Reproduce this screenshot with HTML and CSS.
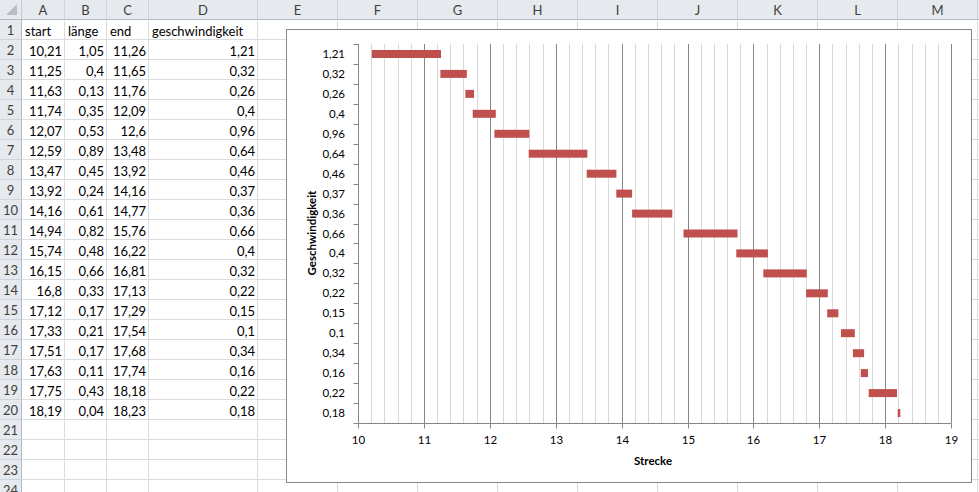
FILE: index.html
```html
<!DOCTYPE html>
<html lang="de">
<head>
  <meta charset="UTF-8" />
  <title>Mappe1 - Microsoft Excel</title>
  <link rel="stylesheet" href="styles.css">
</head>
<body>

  <div class="sheet" id="sheet"></div>

  <div class="chart">
    <svg id="chart" width="684" height="452" xmlns="http://www.w3.org/2000/svg"></svg>
  </div>

<script>
  // start, länge, end, geschwindigkeit
  const data = [
    [10.21, 1.05, 11.26, 1.21],
    [11.25, 0.4, 11.65, 0.32],
    [11.63, 0.13, 11.76, 0.26],
    [11.74, 0.35, 12.09, 0.4],
    [12.07, 0.53, 12.6, 0.96],
    [12.59, 0.89, 13.48, 0.64],
    [13.47, 0.45, 13.92, 0.46],
    [13.92, 0.24, 14.16, 0.37],
    [14.16, 0.61, 14.77, 0.36],
    [14.94, 0.82, 15.76, 0.66],
    [15.74, 0.48, 16.22, 0.4],
    [16.15, 0.66, 16.81, 0.32],
    [16.8, 0.33, 17.13, 0.22],
    [17.12, 0.17, 17.29, 0.15],
    [17.33, 0.21, 17.54, 0.1],
    [17.51, 0.17, 17.68, 0.34],
    [17.63, 0.11, 17.74, 0.16],
    [17.75, 0.43, 18.18, 0.22],
    [18.19, 0.04, 18.23, 0.18]
  ];

  const letters = ['A','B','C','D','E','F','G','H','I','J','K','L','M',''];
  const fmt = v => String(v).replace('.', ',');

  // Spreadsheet grid
  function buildSheet() {
    const sheet = document.getElementById('sheet');
    let html = '<div class="corner"><span class="select-all"></span></div>';
    letters.forEach(l => { html += `<div class="col-head">${l}</div>`; });

    const header = ['start', 'länge', 'end', 'geschwindigkeit'];
    for (let r = 1; r <= 24; r++) {
      html += `<div class="row-head">${r}</div>`;
      for (let c = 0; c < letters.length; c++) {
        let text = '';
        let cls = 'cell';
        if (r === 1 && c < 4) {
          text = header[c];
        } else if (r >= 2 && r <= 20 && c < 4) {
          text = fmt(data[r - 2][c]);
          cls += ' num';
        }
        html += `<div class="${cls}">${text}</div>`;
      }
    }
    sheet.innerHTML = html;
  }

  // Floating bar chart (stacked bar with hidden start series)
  function buildChart() {
    const svg = document.getElementById('chart');
    const x0 = 71, unit = 65.9, top = 14, bottom = 393;
    const catH = (bottom - top) / data.length;
    const px = v => x0 + (v - 10) * unit;
    let out = '';

    // vertical gridlines, minor every 0.2, major every 1
    for (let k = 1; k <= 45; k++) {
      if (k % 5 === 0) continue;
      const x = Math.round(px(10 + k * 0.2)) + 0.5;
      out += `<line class="grid-minor" x1="${x}" y1="${top}" x2="${x}" y2="${bottom}"/>`;
    }
    for (let k = 11; k <= 19; k++) {
      const x = Math.round(px(k)) + 0.5;
      out += `<line class="grid-major" x1="${x}" y1="${top}" x2="${x}" y2="${bottom}"/>`;
    }

    // bars and category labels
    data.forEach((row, i) => {
      const cy = top + (i + 0.5) * catH;
      const x1 = px(row[0]);
      const w = row[1] * unit;
      out += `<rect class="bar" x="${x1.toFixed(1)}" y="${(cy - 4).toFixed(1)}" width="${w.toFixed(1)}" height="8"/>`;
      out += `<text class="tick-label" x="58" y="${(cy + 4).toFixed(1)}" text-anchor="end">${fmt(row[3])}</text>`;
    });

    // axes
    const ax = x0 + 0.5, ay = bottom + 0.5;
    out += `<line class="axis" x1="${ax}" y1="${top}" x2="${ax}" y2="${ay}"/>`;
    out += `<line class="axis" x1="${ax}" y1="${ay}" x2="${Math.round(px(19)) + 0.5}" y2="${ay}"/>`;
    for (let i = 0; i <= data.length; i++) {
      const y = Math.round(top + i * catH) + 0.5;
      out += `<line class="axis" x1="${ax - 5}" y1="${y}" x2="${ax}" y2="${y}"/>`;
    }
    for (let k = 10; k <= 19; k++) {
      const x = Math.round(px(k)) + 0.5;
      out += `<line class="axis" x1="${x}" y1="${ay}" x2="${x}" y2="${ay + 5}"/>`;
      out += `<text class="tick-label" x="${x}" y="414" text-anchor="middle">${k}</text>`;
    }

    // axis titles
    out += `<text class="axis-title" x="366" y="435" text-anchor="middle">Strecke</text>`;
    out += `<text class="axis-title" transform="translate(29 203) rotate(-90)" text-anchor="middle">Geschwindigkeit</text>`;

    svg.innerHTML = out;
  }

  buildSheet();
  buildChart();
</script>

</body>
</html>
```

FILE: styles.css
```css
body {
  margin: 0;
  width: 979px;
  height: 492px;
  overflow: hidden;
  position: relative;
  background: #fff;
  font-family: Lato, "Open Sans", sans-serif;
  font-size: 13px;
}

.sheet {
  display: grid;
  grid-template-columns: 22px 43px 42px 42px 109px repeat(9, 80px) 1fr;
  grid-auto-rows: 20px;
}

.sheet > div {
  box-sizing: border-box;
  line-height: 20px;
  white-space: nowrap;
  overflow: hidden;
}

.corner,
.col-head,
.row-head {
  background: #e6e9ee;
  color: #3f3f3f;
  text-align: center;
}

.corner {
  position: relative;
  border-right: 1px solid #c5cad2;
  border-bottom: 1px solid #b3b9c2;
}

/* grey triangle in the select-all box */
.select-all {
  position: absolute;
  right: 4px;
  bottom: 4px;
  width: 0;
  height: 0;
  border-left: 11px solid transparent;
  border-bottom: 11px solid #b9bec6;
}

.col-head {
  border-right: 1px solid #cfd4db;
  border-bottom: 1px solid #b3b9c2;
}

.row-head {
  border-right: 1px solid #b3b9c2;
  border-bottom: 1px solid #cfd4db;
}

.cell {
  border-right: 1px solid #dadcdd;
  border-bottom: 1px solid #dadcdd;
  padding: 1px 2px 0 3px;
  color: #000;
}

.cell.num {
  text-align: right;
}

.chart {
  position: absolute;
  left: 286px;
  top: 29px;
  width: 684px;
  height: 452px;
  border: 1px solid #868686;
  background: #fff;
}

.chart svg {
  display: block;
}

.grid-minor {
  stroke: #d9d9d9;
  stroke-width: 1;
}

.grid-major,
.axis {
  stroke: #868686;
  stroke-width: 1;
}

.bar {
  fill: #c0504d;
}

.tick-label {
  font-family: Lato, "Open Sans", sans-serif;
  font-size: 11.5px;
  fill: #000;
}

.axis-title {
  font-family: Lato, "Open Sans", sans-serif;
  font-size: 11.5px;
  font-weight: bold;
  fill: #000;
}
```
